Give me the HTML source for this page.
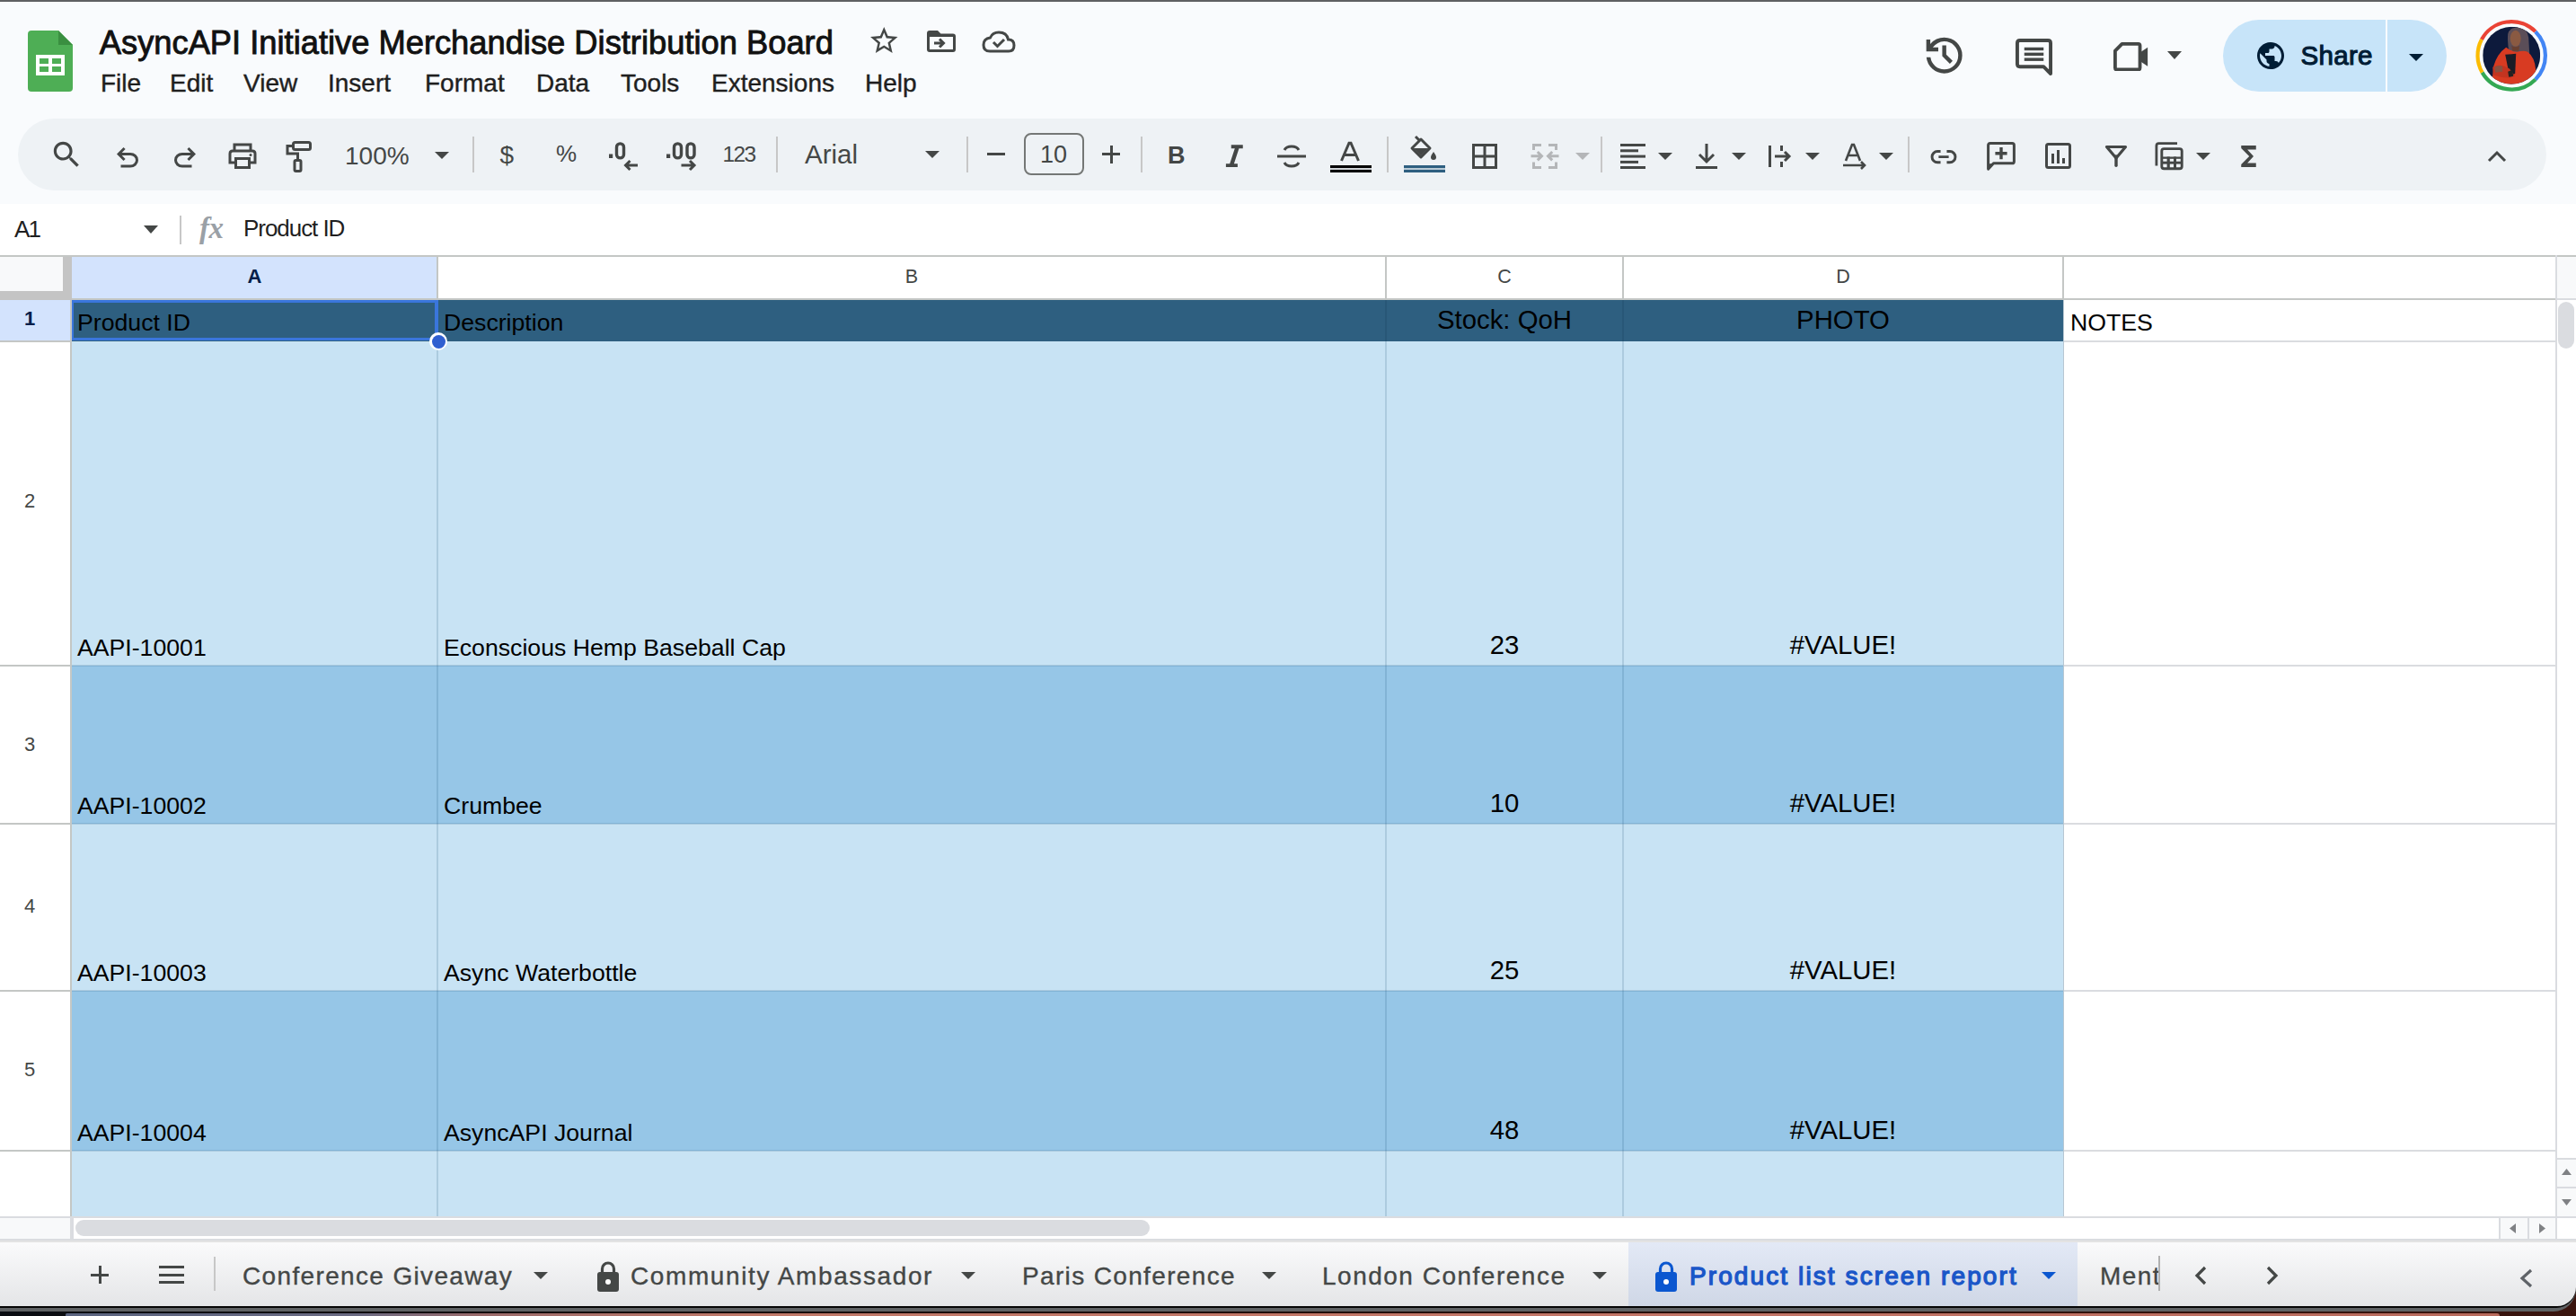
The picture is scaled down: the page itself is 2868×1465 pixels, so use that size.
<!DOCTYPE html><html><head><meta charset="utf-8"><style>
html,body{margin:0;padding:0;width:2868px;height:1465px;overflow:hidden;background:#f9fbfd;}
body{position:relative;font-family:"Liberation Sans",sans-serif;}
.t{position:absolute;white-space:pre;}
.r{position:absolute;}
</style></head><body>
<div class="r" style="left:0px;top:0px;width:2868px;height:2px;background:#5f6062;"></div>
<div class="r" style="left:0px;top:2px;width:2868px;height:225px;background:#f9fbfd;"></div>
<svg class="r" style="left:31px;top:34px;" width="50" height="68" viewBox="0 0 50 68"><path d="M4 0H34L50 16V64Q50 68 46 68H4Q0 68 0 64V4Q0 0 4 0Z" fill="#4eae55"/><path d="M34 0L50 16H34Z" fill="#3a8f40"/><rect x="9" y="27" width="32" height="23" fill="#fff"/><rect x="13" y="31" width="10" height="6" fill="#4eae55"/><rect x="27" y="31" width="10" height="6" fill="#4eae55"/><rect x="13" y="40" width="10" height="6" fill="#4eae55"/><rect x="27" y="40" width="10" height="6" fill="#4eae55"/></svg>
<div class="t" style="left:110.8px;top:30.46px;font-size:36.3px;line-height:36.3px;color:#111;font-weight:400;letter-spacing:0px;font-family:'Liberation Sans',sans-serif;-webkit-text-stroke:0.9px #111;">AsyncAPI Initiative Merchandise Distribution Board</div>
<div class="t" style="left:112px;top:79.09px;font-size:28px;line-height:28px;color:#1f1f1f;font-weight:400;letter-spacing:0px;font-family:'Liberation Sans',sans-serif;-webkit-text-stroke:0.4px #1f1f1f;">File</div>
<div class="t" style="left:189px;top:79.09px;font-size:28px;line-height:28px;color:#1f1f1f;font-weight:400;letter-spacing:0px;font-family:'Liberation Sans',sans-serif;-webkit-text-stroke:0.4px #1f1f1f;">Edit</div>
<div class="t" style="left:271px;top:79.09px;font-size:28px;line-height:28px;color:#1f1f1f;font-weight:400;letter-spacing:0px;font-family:'Liberation Sans',sans-serif;-webkit-text-stroke:0.4px #1f1f1f;">View</div>
<div class="t" style="left:365px;top:79.09px;font-size:28px;line-height:28px;color:#1f1f1f;font-weight:400;letter-spacing:0px;font-family:'Liberation Sans',sans-serif;-webkit-text-stroke:0.4px #1f1f1f;">Insert</div>
<div class="t" style="left:473px;top:79.09px;font-size:28px;line-height:28px;color:#1f1f1f;font-weight:400;letter-spacing:0px;font-family:'Liberation Sans',sans-serif;-webkit-text-stroke:0.4px #1f1f1f;">Format</div>
<div class="t" style="left:597px;top:79.09px;font-size:28px;line-height:28px;color:#1f1f1f;font-weight:400;letter-spacing:0px;font-family:'Liberation Sans',sans-serif;-webkit-text-stroke:0.4px #1f1f1f;">Data</div>
<div class="t" style="left:691px;top:79.09px;font-size:28px;line-height:28px;color:#1f1f1f;font-weight:400;letter-spacing:0px;font-family:'Liberation Sans',sans-serif;-webkit-text-stroke:0.4px #1f1f1f;">Tools</div>
<div class="t" style="left:792px;top:79.09px;font-size:28px;line-height:28px;color:#1f1f1f;font-weight:400;letter-spacing:0px;font-family:'Liberation Sans',sans-serif;-webkit-text-stroke:0.4px #1f1f1f;">Extensions</div>
<div class="t" style="left:963px;top:79.09px;font-size:28px;line-height:28px;color:#1f1f1f;font-weight:400;letter-spacing:0px;font-family:'Liberation Sans',sans-serif;-webkit-text-stroke:0.4px #1f1f1f;">Help</div>
<svg class="r" style="left:965.6px;top:27px;" width="36.5" height="36.5" viewBox="0 0 24 24"><path d="M22 9.24l-7.19-.62L12 2 9.19 8.63 2 9.24l5.46 4.73L5.82 21 12 17.27 18.18 21l-1.63-7.03L22 9.24zM12 15.4l-3.76 2.27 1-4.28-3.32-2.88 4.38-.38L12 6.1l1.71 4.04 4.38.38-3.32 2.88 1 4.28L12 15.4z" fill="#444746"/></svg>
<svg class="r" style="left:1030px;top:31px;" width="36" height="30" viewBox="0 0 36 30"><path d="M5 3H14L17.5 6.5H31Q34 6.5 34 9.5V24Q34 27 31 27H5Q2 27 2 24V6Q2 3 5 3Z" fill="#444746"/><rect x="5" y="10" width="26" height="14" fill="#f9fbfd"/><path d="M10 17H20M16 12.5L20.5 17L16 21.5" fill="none" stroke="#444746" stroke-width="3"/></svg>
<svg class="r" style="left:1092px;top:31.5px;" width="40" height="28" viewBox="0 0 40 28"><path d="M10 25H31Q37 25 37 18.5Q37 12 30.5 12Q29 4 20 4Q13 4 10.5 10Q3 11 3 18Q3 25 10 25Z" fill="none" stroke="#444746" stroke-width="3"/><path d="M14 15L18.5 19.5L26 12" fill="none" stroke="#444746" stroke-width="3"/></svg>
<svg class="r" style="left:2138.3px;top:35.3px;" width="53.3" height="53.3" viewBox="0 -960 960 960"><path d="M480-120q-138 0-240.5-91.5T122-440h82q14 104 92.5 172T480-200q117 0 198.5-81.5T760-480q0-117-81.5-198.5T480-760q-69 0-129 32t-101 88h110v80H120v-240h80v94q51-64 124.5-99T480-840q75 0 140.5 28.5t114 77q48.5 48.5 77 114T840-480q0 75-28.5 140.5t-77 114q-48.5 48.5-114 77T480-120Zm112-192L440-464v-216h80v184l128 128-56 56Z" fill="#444746"/></svg>
<svg class="r" style="left:2243.5px;top:42.5px;" width="41" height="41" viewBox="0 0 42 42"><path d="M5 2H37Q40 2 40 5V40L32 32H5Q2 32 2 29V5Q2 2 5 2Z" fill="none" stroke="#444746" stroke-width="4" stroke-linejoin="round"/><rect x="10" y="10" width="22" height="3.5" fill="#444746"/><rect x="10" y="16" width="22" height="3.5" fill="#444746"/><rect x="10" y="22" width="22" height="3.5" fill="#444746"/></svg>
<svg class="r" style="left:2353px;top:46.8px;" width="40" height="32.4" viewBox="0 0 42 34"><path d="M10 2H29Q31 2 31 4V30Q31 32 29 32H4Q2 32 2 30V10Z" fill="none" stroke="#444746" stroke-width="4" stroke-linejoin="round"/><path d="M31 12L40 6V28L31 22Z" fill="#444746"/></svg>
<svg class="r" style="left:2413px;top:57px;" width="16" height="9" viewBox="0 0 16 9"><path d="M0 0H16L8 9Z" fill="#444746"/></svg>
<div class="r" style="left:2475px;top:22px;width:249px;height:80px;background:#c7e4f9;border-radius:40px;"></div>
<div class="r" style="left:2655.5px;top:22px;width:2px;height:80px;background:#f9fbfd;"></div>
<svg class="r" style="left:2510px;top:43.7px;" width="36" height="36" viewBox="0 0 24 24"><path d="M12 2C6.48 2 2 6.48 2 12s4.48 10 10 10 10-4.48 10-10S17.52 2 12 2zm-1 17.93c-3.95-.49-7-3.85-7-7.93 0-.62.08-1.21.21-1.79L9 15v1c0 1.1.9 2 2 2v1.93zm6.9-2.54c-.26-.81-1-1.39-1.9-1.39h-1v-3c0-.55-.45-1-1-1H8v-2h2c.55 0 1-.45 1-1V7h2c1.1 0 2-.9 2-2v-.41c2.93 1.19 5 4.06 5 7.41 0 2.08-.8 3.97-2.1 5.39z" fill="#001d35"/></svg>
<div class="t" style="left:2561.5px;top:46.52px;font-size:29.5px;line-height:29.5px;color:#001d35;font-weight:400;letter-spacing:0.3px;font-family:'Liberation Sans',sans-serif;-webkit-text-stroke:1.1px #001d35;">Share</div>
<svg class="r" style="left:2682px;top:60px;" width="16" height="8" viewBox="0 0 16 8"><path d="M0 0H16L8 8Z" fill="#001d35"/></svg>
<svg class="r" style="left:2755px;top:21px;" width="82" height="82" viewBox="0 0 82 82"><path d="M7.91 23.10A37.7 37.7 0 0 1 67.86 14.14" fill="none" stroke="#ea4335" stroke-width="4.2"/><path d="M67.86 14.14A37.7 37.7 0 0 1 67.86 67.46" fill="none" stroke="#4285f4" stroke-width="4.2"/><path d="M67.86 67.46A37.7 37.7 0 0 1 8.55 59.65" fill="none" stroke="#34a853" stroke-width="4.2"/><path d="M8.55 59.65A37.7 37.7 0 0 1 7.91 23.10" fill="none" stroke="#fbbc04" stroke-width="4.2"/>
<clipPath id="av"><circle cx="32" cy="32" r="32"/></clipPath>
<g transform="translate(9.2,8.8)"><g clip-path="url(#av)"><rect x="0" y="0" width="64" height="64" fill="#0d1a3c"/>
<path d="M28 8Q30 0 40 1Q50 2 51 12L52 30Q48 34 42 32L30 30Q27 20 28 8Z" fill="#5b4e58"/>
<ellipse cx="36.5" cy="13" rx="6" ry="9" fill="#8a5a42"/>
<path d="M32 21Q36 24 41 21L40 27L33 27Z" fill="#6a4030"/>
<path d="M10 64L12 44Q16 30 26 23Q33 28 38 28Q46 26 50 28Q58 34 59 48L60 64Z" fill="#d83b22"/>
<path d="M25 31L37 30L36 52L30 56Z" fill="#1a1c26"/>
<path d="M11 45Q20 40 30 47L36 55Q30 58 20 56L12 54Z" fill="#c43420"/>
<path d="M13 45Q17 42 22 44L22 50L14 51Z" fill="#8a5040"/>
<path d="M28 50L33 48L34 55L29 56Z" fill="#222"/>
</g></g></svg>
<div class="r" style="left:20px;top:132px;width:2815px;height:80px;background:#eef2f5;border-radius:40px;"></div>
<svg class="r" style="left:55.2px;top:153.2px;" width="38.4" height="38.4" viewBox="0 0 24 24"><path d="M15.5 14h-.79l-.28-.27C15.41 12.59 16 11.11 16 9.5 16 5.91 13.09 3 9.5 3S3 5.91 3 9.5 5.91 16 9.5 16c1.61 0 3.09-.59 4.23-1.57l.27.28v.79l5 4.99L20.49 19l-4.99-5zm-6 0C7.01 14 5 11.99 5 9.5S7.01 5 9.5 5 14 7.01 14 9.5 11.99 14 9.5 14z" fill="#444746"/></svg>
<svg class="r" style="left:124px;top:158px;" width="36" height="36" viewBox="0 -960 960 960"><path d="M280-200v-80h284q63 0 109.5-40T720-420q0-60-46.5-100T564-560H312l104 104-56 56-200-200 200-200 56 56-104 104h252q97 0 166.5 63T800-420q0 94-69.5 157T564-200H280Z" fill="#444746"/></svg>
<svg class="r" style="left:188px;top:158px;" width="36" height="36" viewBox="0 -960 960 960"><path d="M396-200q-97 0-166.5-63T160-420q0-94 69.5-157T396-640h252L544-744l56-56 200 200-200 200-56-56 104-104H396q-63 0-109.5 40T240-420q0 60 46.5 100T396-280h284v80H396Z" fill="#444746"/></svg>
<svg class="r" style="left:254px;top:159px;" width="32" height="30" viewBox="0 0 32 30"><path d="M7 9V2H25V9" fill="none" stroke="#444746" stroke-width="3"/><path d="M7 22H2V12Q2 9 5 9H27Q30 9 30 12V22H25" fill="none" stroke="#444746" stroke-width="3"/><rect x="8.5" y="17.5" width="15" height="10" fill="none" stroke="#444746" stroke-width="3"/><circle cx="25" cy="13.5" r="1.5" fill="#444746"/></svg>
<svg class="r" style="left:317px;top:157px;" width="30" height="36" viewBox="0 0 30 36"><rect x="9.5" y="1.5" width="19" height="8" rx="2" fill="none" stroke="#444746" stroke-width="3"/><path d="M9.5 5.5H3V14H14.5V21" fill="none" stroke="#444746" stroke-width="3"/><rect x="11" y="21.5" width="7" height="12" rx="1.5" fill="none" stroke="#444746" stroke-width="3"/></svg>
<div class="t" style="left:384px;top:160.29px;font-size:28px;line-height:28px;color:#444746;font-weight:400;letter-spacing:0px;font-family:'Liberation Sans',sans-serif;">100%</div>
<svg class="r" style="left:484px;top:169px;" width="16" height="8" viewBox="0 0 16 8"><path d="M0 0H16L8 8Z" fill="#444746"/></svg>
<div class="r" style="left:526px;top:152px;width:2px;height:40px;background:#c7c7c7;"></div>
<div class="t" style="left:556.5px;top:158.79px;font-size:28px;line-height:28px;color:#444746;font-weight:400;letter-spacing:0px;font-family:'Liberation Sans',sans-serif;">$</div>
<div class="t" style="left:619px;top:158.49px;font-size:26px;line-height:26px;color:#444746;font-weight:400;letter-spacing:0px;font-family:'Liberation Sans',sans-serif;">%</div>
<svg class="r" style="left:676px;top:156px;" width="36" height="36" viewBox="0 0 36 36"><rect x="2" y="15.5" width="4.2" height="4.5" fill="#444746"/><rect x="10.5" y="3.9" width="8" height="16" rx="4" fill="none" stroke="#444746" stroke-width="3.4"/><path d="M34 28H21M25.5 23L20.5 28L25.5 33" fill="none" stroke="#444746" stroke-width="3"/></svg>
<svg class="r" style="left:740px;top:156px;" width="36" height="36" viewBox="0 0 36 36"><rect x="2" y="15.5" width="4.2" height="4.5" fill="#444746"/><rect x="10.5" y="3.9" width="8" height="16" rx="4" fill="none" stroke="#444746" stroke-width="3.4"/><rect x="25" y="3.9" width="8" height="16" rx="4" fill="none" stroke="#444746" stroke-width="3.4"/><path d="M18.5 28H32M28 23L33 28L28 33" fill="none" stroke="#444746" stroke-width="3"/></svg>
<div class="t" style="left:804.5px;top:160.26px;font-size:24.5px;line-height:24.5px;color:#444746;font-weight:400;letter-spacing:-1.6px;font-family:'Liberation Sans',sans-serif;">123</div>
<div class="r" style="left:864px;top:152px;width:2px;height:40px;background:#c7c7c7;"></div>
<div class="t" style="left:896px;top:156.52px;font-size:29.5px;line-height:29.5px;color:#444746;font-weight:400;letter-spacing:0px;font-family:'Liberation Sans',sans-serif;">Arial</div>
<svg class="r" style="left:1030px;top:168px;" width="16" height="8" viewBox="0 0 16 8"><path d="M0 0H16L8 8Z" fill="#444746"/></svg>
<div class="r" style="left:1076px;top:152px;width:2px;height:40px;background:#c7c7c7;"></div>
<div class="r" style="left:1099px;top:170px;width:20px;height:3px;background:#444746;"></div>
<div class="r" style="left:1140px;top:148px;width:67px;height:47px;background:transparent;border:2px solid #747775;border-radius:8px;box-sizing:border-box;"></div>
<div class="t" style="left:1158px;top:159.14px;font-size:27px;line-height:27px;color:#444746;font-weight:400;letter-spacing:0px;font-family:'Liberation Sans',sans-serif;">10</div>
<div class="r" style="left:1227px;top:170px;width:20px;height:3px;background:#444746;"></div>
<div class="r" style="left:1235.5px;top:162px;width:3px;height:20px;background:#444746;"></div>
<div class="r" style="left:1270px;top:152px;width:2px;height:40px;background:#c7c7c7;"></div>
<div class="t" style="left:1300px;top:160.14px;font-size:27px;line-height:27px;color:#444746;font-weight:700;letter-spacing:0px;font-family:'Liberation Sans',sans-serif;">B</div>
<svg class="r" style="left:1361px;top:160px;" width="26" height="28" viewBox="0 0 20 21.5"><path d="M7.5 1v3h3.1l-4.3 13H3v3h10v-3H9.9l4.3-13H17.5V1z" fill="#444746"/></svg>
<svg class="r" style="left:1421px;top:161px;" width="34" height="26" viewBox="0 0 34 26"><path d="M9 6Q11 2 17 2Q23 2 25 6M9 20Q11 24 17 24Q23 24 25 20" fill="none" stroke="#444746" stroke-width="3"/><rect x="1" y="11.5" width="32" height="3" fill="#444746"/></svg>
<svg class="r" style="left:1490px;top:157px;" width="26" height="24" viewBox="0 0 26 24"><path d="M3.5 22L12 2.2H14L22.5 22M7 15.5H19" fill="none" stroke="#444746" stroke-width="3"/></svg>
<div class="r" style="left:1481px;top:184px;width:46px;height:8px;background:#000;"></div>
<div class="r" style="left:1481px;top:186.5px;width:46px;height:2.2px;background:#cfd3d7;"></div>
<div class="r" style="left:1544px;top:152px;width:2px;height:40px;background:#c7c7c7;"></div>
<svg class="r" style="left:1568px;top:150px;" width="34" height="30" viewBox="0 0 34 30"><path d="M8 2L12 6" stroke="#444746" stroke-width="3"/><path d="M4 15L14 5L24 15L14 25Z" fill="none" stroke="#444746" stroke-width="3" stroke-linejoin="round"/><path d="M5.5 15H22.5L14 23.5Z" fill="#444746"/><path d="M28 19Q31 23 31 25A3 3 0 0 1 25 25Q25 23 28 19Z" fill="#444746"/></svg>
<div class="r" style="left:1563px;top:184px;width:46px;height:8px;background:#2e5f80;"></div>
<div class="r" style="left:1563px;top:186.5px;width:46px;height:2.2px;background:#b9cad6;"></div>
<svg class="r" style="left:1639px;top:160px;" width="28" height="28" viewBox="0 0 28 28"><rect x="1.5" y="1.5" width="25" height="25" fill="none" stroke="#444746" stroke-width="3"/><path d="M14 1V27M1 14H27" stroke="#444746" stroke-width="3"/></svg>
<svg class="r" style="left:1704px;top:160px;" width="32" height="28" viewBox="0 0 32 28"><path d="M12 1.5H3.5V7M3.5 20.5V26.5H12M20 1.5H28.5V7M28.5 20.5V26.5H20" fill="none" stroke="#b4b6b8" stroke-width="3"/><path d="M0.5 13.7H12M7.8 9L12.5 13.7L7.8 18.4M31.5 13.7H20M24.2 9L19.5 13.7L24.2 18.4" fill="none" stroke="#b4b6b8" stroke-width="3"/></svg>
<svg class="r" style="left:1754px;top:170px;" width="16" height="8" viewBox="0 0 16 8"><path d="M0 0H16L8 8Z" fill="#b4b6b8"/></svg>
<div class="r" style="left:1782px;top:152px;width:2px;height:40px;background:#c7c7c7;"></div>
<svg class="r" style="left:1804px;top:160px;" width="28" height="28" viewBox="0 0 28 28"><rect x="0" y="0" width="28" height="3" fill="#444746"/><rect x="0" y="6.3" width="20" height="3" fill="#444746"/><rect x="0" y="12.6" width="28" height="3" fill="#444746"/><rect x="0" y="18.9" width="20" height="3" fill="#444746"/><rect x="0" y="25" width="28" height="3" fill="#444746"/></svg>
<svg class="r" style="left:1846px;top:170px;" width="16" height="8" viewBox="0 0 16 8"><path d="M0 0H16L8 8Z" fill="#444746"/></svg>
<svg class="r" style="left:1888px;top:160px;" width="24" height="28" viewBox="0 0 24 28"><path d="M12 0V20M4 12L12 20L20 12" fill="none" stroke="#444746" stroke-width="3"/><rect x="0" y="25" width="24" height="3" fill="#444746"/></svg>
<svg class="r" style="left:1928px;top:170px;" width="16" height="8" viewBox="0 0 16 8"><path d="M0 0H16L8 8Z" fill="#444746"/></svg>
<svg class="r" style="left:1969px;top:162px;" width="26" height="24" viewBox="0 0 26 24"><rect x="0" y="0" width="3" height="24" fill="#444746"/><rect x="13" y="0" width="3" height="6" fill="#444746"/><rect x="13" y="18" width="3" height="6" fill="#444746"/><path d="M7 12H23M18 7L23 12L18 17" fill="none" stroke="#444746" stroke-width="3"/></svg>
<svg class="r" style="left:2010px;top:170px;" width="16" height="8" viewBox="0 0 16 8"><path d="M0 0H16L8 8Z" fill="#444746"/></svg>
<svg class="r" style="left:2052px;top:159px;" width="28" height="30" viewBox="0 0 28 30"><path d="M3 20L10 2H12L19 20M6 14H16" fill="none" stroke="#444746" stroke-width="2.6"/><path d="M0 25H24M20 21L24 25L20 29" fill="none" stroke="#444746" stroke-width="2.6"/></svg>
<svg class="r" style="left:2092px;top:170px;" width="16" height="8" viewBox="0 0 16 8"><path d="M0 0H16L8 8Z" fill="#444746"/></svg>
<div class="r" style="left:2124px;top:152px;width:2px;height:40px;background:#c7c7c7;"></div>
<svg class="r" style="left:2147px;top:165.7px;" width="34" height="17.3" viewBox="0 0 34 20"><path d="M13 3H9A7 7 0 0 0 9 17H13M21 3H25A7 7 0 0 1 25 17H21M10.5 10H23.5" fill="none" stroke="#444746" stroke-width="3.4"/></svg>
<svg class="r" style="left:2212px;top:157.5px;" width="32" height="32" viewBox="0 0 34 34"><path d="M4 1.7H30Q32.3 1.7 32.3 4V23Q32.3 25.3 30 25.3H8L1.7 32V4Q1.7 1.7 4 1.7Z" fill="none" stroke="#444746" stroke-width="3.2" stroke-linejoin="round"/><path d="M1.7 26L1.7 32L8 25.3Z" fill="#444746"/><path d="M17 6.5V20.5M10 13.5H24" stroke="#444746" stroke-width="3.6"/></svg>
<svg class="r" style="left:2277px;top:159px;" width="30" height="30" viewBox="0 0 30 30"><rect x="1.5" y="1.5" width="26" height="26" rx="2" fill="none" stroke="#444746" stroke-width="3"/><rect x="7" y="12" width="3" height="11" fill="#444746"/><rect x="13" y="8" width="3" height="15" fill="#444746"/><rect x="19" y="17" width="3" height="6" fill="#444746"/></svg>
<svg class="r" style="left:2343px;top:161px;" width="26" height="26" viewBox="0 0 26 26"><path d="M2.5 2.5H23.5L13 15Z" fill="none" stroke="#444746" stroke-width="3.2" stroke-linejoin="round"/><path d="M13 13V23.3" stroke="#444746" stroke-width="3.4" stroke-linecap="round"/></svg>
<svg class="r" style="left:2398px;top:157px;" width="34" height="34" viewBox="0 0 34 34"><path d="M26 2.6H5.5Q2.9 2.6 2.9 5.2V27.5" fill="none" stroke="#444746" stroke-width="2.8"/><rect x="8.8" y="8.6" width="22.4" height="22.2" rx="2.5" fill="none" stroke="#444746" stroke-width="2.9"/><rect x="8.8" y="17.5" width="22.4" height="2.3" fill="#444746"/><rect x="8.8" y="22.7" width="22.4" height="2.9" fill="#444746"/><rect x="14.6" y="17.5" width="3.2" height="13" fill="#444746"/><rect x="22" y="17.5" width="3" height="13" fill="#444746"/></svg>
<svg class="r" style="left:2445px;top:170px;" width="16" height="8" viewBox="0 0 16 8"><path d="M0 0H16L8 8Z" fill="#444746"/></svg>
<svg class="r" style="left:2486.5px;top:156px" width="33" height="36" viewBox="0 0 24 24" preserveAspectRatio="none"><path d="M18 4H6v2l6.5 6L6 18v2h12v-3h-7l5-5-5-5h7z" fill="#444746"/></svg>
<svg class="r" style="left:2769px;top:167px;" width="22" height="14" viewBox="0 0 22 14"><path d="M2 12L11 3L20 12" fill="none" stroke="#444746" stroke-width="3"/></svg>
<div class="r" style="left:0px;top:227px;width:2868px;height:58px;background:#ffffff;"></div>
<div class="t" style="left:16px;top:241.99px;font-size:26px;line-height:26px;color:#1f1f1f;font-weight:400;letter-spacing:0px;font-family:'Liberation Sans',sans-serif;">A</div>
<div class="t" style="left:31.5px;top:241.99px;font-size:26px;line-height:26px;color:#1f1f1f;font-weight:400;letter-spacing:0px;font-family:'Liberation Sans',sans-serif;">1</div>
<svg class="r" style="left:160px;top:251px;" width="16" height="9" viewBox="0 0 16 9"><path d="M0 0H16L8 9Z" fill="#444746"/></svg>
<div class="r" style="left:200px;top:240px;width:2px;height:32px;background:#c7c7c7;"></div>
<div class="t" style="left:222px;top:238.06px;font-size:33px;line-height:33px;color:#9aa0a6;font-weight:700;letter-spacing:-0.5px;font-family:'Liberation Serif',sans-serif;font-style:italic;">fx</div>
<div class="t" style="left:271px;top:241.49px;font-size:26px;line-height:26px;color:#1f1f1f;font-weight:400;letter-spacing:-1.05px;font-family:'Liberation Sans',sans-serif;">Product ID</div>
<div class="r" style="left:0px;top:285px;width:2868px;height:49px;background:#ffffff;"></div>
<div class="r" style="left:80px;top:286px;width:407px;height:47px;background:#d3e3fd;"></div>
<div class="r" style="left:0px;top:286px;width:70px;height:38px;background:#f8f9fa;"></div>
<div class="r" style="left:70px;top:286px;width:10px;height:48px;background:#c4c4c4;"></div>
<div class="r" style="left:0px;top:324px;width:80px;height:10px;background:#c4c4c4;"></div>
<div class="r" style="left:0px;top:334px;width:78px;height:1021px;background:#ffffff;"></div>
<div class="r" style="left:0px;top:334px;width:78px;height:46px;background:#d3e3fd;"></div>
<div class="r" style="left:0px;top:284px;width:2868px;height:2px;background:#c4c7c5;"></div>
<div class="r" style="left:80px;top:332px;width:2765px;height:2px;background:#c4c7c5;"></div>
<div class="r" style="left:486px;top:286px;width:2px;height:47px;background:#c4c7c5;"></div>
<div class="r" style="left:1542px;top:286px;width:2px;height:47px;background:#c4c7c5;"></div>
<div class="r" style="left:1806px;top:286px;width:2px;height:47px;background:#c4c7c5;"></div>
<div class="r" style="left:2296px;top:286px;width:2px;height:47px;background:#c4c7c5;"></div>
<div class="r" style="left:0px;top:379px;width:78px;height:2px;background:#c4c7c5;"></div>
<div class="r" style="left:0px;top:740px;width:78px;height:2px;background:#c4c7c5;"></div>
<div class="r" style="left:0px;top:916px;width:78px;height:2px;background:#c4c7c5;"></div>
<div class="r" style="left:0px;top:1102px;width:78px;height:2px;background:#c4c7c5;"></div>
<div class="r" style="left:0px;top:1280px;width:78px;height:2px;background:#c4c7c5;"></div>
<div class="r" style="left:0px;top:1354px;width:78px;height:2px;background:#c4c7c5;"></div>
<div class="r" style="left:78px;top:334px;width:2px;height:1047px;background:#c4c7c5;"></div>
<div class="r" style="left:80px;top:334px;width:2217px;height:46px;background:#2e5f80;"></div>
<div class="r" style="left:80px;top:380px;width:2217px;height:361px;background:#c8e3f4;"></div>
<div class="r" style="left:80px;top:741px;width:2217px;height:176px;background:#96c6e7;"></div>
<div class="r" style="left:80px;top:917px;width:2217px;height:186px;background:#c8e3f4;"></div>
<div class="r" style="left:80px;top:1103px;width:2217px;height:178px;background:#96c6e7;"></div>
<div class="r" style="left:80px;top:1281px;width:2217px;height:74px;background:#c8e3f4;"></div>
<div class="r" style="left:2297px;top:334px;width:548px;height:1021px;background:#ffffff;"></div>
<div class="r" style="left:486px;top:334px;width:2px;height:46px;background:rgba(0,30,60,0.12);"></div>
<div class="r" style="left:486px;top:380px;width:2px;height:975px;background:rgba(30,80,120,0.16);"></div>
<div class="r" style="left:1542px;top:334px;width:2px;height:46px;background:rgba(0,30,60,0.12);"></div>
<div class="r" style="left:1542px;top:380px;width:2px;height:975px;background:rgba(30,80,120,0.16);"></div>
<div class="r" style="left:1806px;top:334px;width:2px;height:46px;background:rgba(0,30,60,0.12);"></div>
<div class="r" style="left:1806px;top:380px;width:2px;height:975px;background:rgba(30,80,120,0.16);"></div>
<div class="r" style="left:80px;top:740px;width:2217px;height:2px;background:rgba(30,80,120,0.16);"></div>
<div class="r" style="left:80px;top:916px;width:2217px;height:2px;background:rgba(30,80,120,0.16);"></div>
<div class="r" style="left:80px;top:1102px;width:2217px;height:2px;background:rgba(30,80,120,0.16);"></div>
<div class="r" style="left:80px;top:1280px;width:2217px;height:2px;background:rgba(30,80,120,0.16);"></div>
<div class="r" style="left:2297px;top:379px;width:548px;height:2px;background:#dadce0;"></div>
<div class="r" style="left:2297px;top:740px;width:548px;height:2px;background:#dadce0;"></div>
<div class="r" style="left:2297px;top:916px;width:548px;height:2px;background:#dadce0;"></div>
<div class="r" style="left:2297px;top:1102px;width:548px;height:2px;background:#dadce0;"></div>
<div class="r" style="left:2297px;top:1280px;width:548px;height:2px;background:#dadce0;"></div>
<div class="r" style="left:2297px;top:334px;width:1px;height:1021px;background:#b8c7d2;"></div>
<div class="t" style="left:133.5px;width:300px;text-align:center;top:297.37px;font-size:22px;line-height:22px;color:#041e49;font-weight:700;letter-spacing:0px">A</div>
<div class="t" style="left:865.0px;width:300px;text-align:center;top:297.80px;font-size:21.5px;line-height:21.5px;color:#444746;font-weight:400;letter-spacing:0px">B</div>
<div class="t" style="left:1575.0px;width:200px;text-align:center;top:297.80px;font-size:21.5px;line-height:21.5px;color:#444746;font-weight:400;letter-spacing:0px">C</div>
<div class="t" style="left:1952.0px;width:200px;text-align:center;top:297.80px;font-size:21.5px;line-height:21.5px;color:#444746;font-weight:400;letter-spacing:0px">D</div>
<div class="t" style="left:3.0px;width:60px;text-align:center;top:343.87px;font-size:22px;line-height:22px;color:#041e49;font-weight:700;letter-spacing:0px">1</div>
<div class="t" style="left:3.0px;width:60px;text-align:center;top:547.37px;font-size:22px;line-height:22px;color:#444746;font-weight:400;letter-spacing:0px">2</div>
<div class="t" style="left:3.0px;width:60px;text-align:center;top:818.37px;font-size:22px;line-height:22px;color:#444746;font-weight:400;letter-spacing:0px">3</div>
<div class="t" style="left:3.0px;width:60px;text-align:center;top:997.87px;font-size:22px;line-height:22px;color:#444746;font-weight:400;letter-spacing:0px">4</div>
<div class="t" style="left:3.0px;width:60px;text-align:center;top:1179.87px;font-size:22px;line-height:22px;color:#444746;font-weight:400;letter-spacing:0px">5</div>
<div class="t" style="left:86px;top:345.92px;font-size:26.67px;line-height:26.67px;color:#000;font-weight:400;letter-spacing:0px;font-family:'Liberation Sans',sans-serif;">Product ID</div>
<div class="t" style="left:494px;top:345.92px;font-size:26.67px;line-height:26.67px;color:#000;font-weight:400;letter-spacing:0px;font-family:'Liberation Sans',sans-serif;">Description</div>
<div class="t" style="left:1545.0px;width:260px;text-align:center;top:341.17px;font-size:29.33px;line-height:29.33px;color:#000;font-weight:400;letter-spacing:0px">Stock: QoH</div>
<div class="t" style="left:1852.0px;width:400px;text-align:center;top:341.17px;font-size:29.33px;line-height:29.33px;color:#000;font-weight:400;letter-spacing:0px">PHOTO</div>
<div class="t" style="left:2305px;top:345.92px;font-size:26.67px;line-height:26.67px;color:#000;font-weight:400;letter-spacing:0px;font-family:'Liberation Sans',sans-serif;">NOTES</div>
<div class="t" style="left:86px;top:708.22px;font-size:26.67px;line-height:26.67px;color:#000;font-weight:400;letter-spacing:0px;font-family:'Liberation Sans',sans-serif;">AAPI-10001</div>
<div class="t" style="left:494px;top:708.22px;font-size:26.67px;line-height:26.67px;color:#000;font-weight:400;letter-spacing:0px;font-family:'Liberation Sans',sans-serif;">Econscious Hemp Baseball Cap</div>
<div class="t" style="left:1545.0px;width:260px;text-align:center;top:703.17px;font-size:29.33px;line-height:29.33px;color:#000;font-weight:400;letter-spacing:0px">23</div>
<div class="t" style="left:1852.0px;width:400px;text-align:center;top:703.17px;font-size:29.33px;line-height:29.33px;color:#000;font-weight:400;letter-spacing:0px">#VALUE!</div>
<div class="t" style="left:86px;top:884.22px;font-size:26.67px;line-height:26.67px;color:#000;font-weight:400;letter-spacing:0px;font-family:'Liberation Sans',sans-serif;">AAPI-10002</div>
<div class="t" style="left:494px;top:884.22px;font-size:26.67px;line-height:26.67px;color:#000;font-weight:400;letter-spacing:0px;font-family:'Liberation Sans',sans-serif;">Crumbee</div>
<div class="t" style="left:1545.0px;width:260px;text-align:center;top:879.17px;font-size:29.33px;line-height:29.33px;color:#000;font-weight:400;letter-spacing:0px">10</div>
<div class="t" style="left:1852.0px;width:400px;text-align:center;top:879.17px;font-size:29.33px;line-height:29.33px;color:#000;font-weight:400;letter-spacing:0px">#VALUE!</div>
<div class="t" style="left:86px;top:1070.22px;font-size:26.67px;line-height:26.67px;color:#000;font-weight:400;letter-spacing:0px;font-family:'Liberation Sans',sans-serif;">AAPI-10003</div>
<div class="t" style="left:494px;top:1070.22px;font-size:26.67px;line-height:26.67px;color:#000;font-weight:400;letter-spacing:0px;font-family:'Liberation Sans',sans-serif;">Async Waterbottle</div>
<div class="t" style="left:1545.0px;width:260px;text-align:center;top:1065.17px;font-size:29.33px;line-height:29.33px;color:#000;font-weight:400;letter-spacing:0px">25</div>
<div class="t" style="left:1852.0px;width:400px;text-align:center;top:1065.17px;font-size:29.33px;line-height:29.33px;color:#000;font-weight:400;letter-spacing:0px">#VALUE!</div>
<div class="t" style="left:86px;top:1248.22px;font-size:26.67px;line-height:26.67px;color:#000;font-weight:400;letter-spacing:0px;font-family:'Liberation Sans',sans-serif;">AAPI-10004</div>
<div class="t" style="left:494px;top:1248.22px;font-size:26.67px;line-height:26.67px;color:#000;font-weight:400;letter-spacing:0px;font-family:'Liberation Sans',sans-serif;">AsyncAPI Journal</div>
<div class="t" style="left:1545.0px;width:260px;text-align:center;top:1243.17px;font-size:29.33px;line-height:29.33px;color:#000;font-weight:400;letter-spacing:0px">48</div>
<div class="t" style="left:1852.0px;width:400px;text-align:center;top:1243.17px;font-size:29.33px;line-height:29.33px;color:#000;font-weight:400;letter-spacing:0px">#VALUE!</div>
<div class="r" style="left:80px;top:334px;width:408px;height:2.5px;background:#3a76dc;"></div>
<div class="r" style="left:80px;top:375.5px;width:408px;height:3px;background:#3a76dc;"></div>
<div class="r" style="left:80px;top:334px;width:2px;height:45px;background:#3a76dc;"></div>
<div class="r" style="left:484px;top:334px;width:4px;height:45px;background:#3a76dc;"></div>
<div class="r" style="left:478px;top:370px;width:20px;height:20px;border-radius:50%;background:#fff;"></div>
<div class="r" style="left:480.5px;top:372.5px;width:15px;height:15px;border-radius:50%;background:#2f5fd0;"></div>
<div class="r" style="left:2845px;top:286px;width:23px;height:1095px;background:#ffffff;"></div>
<div class="r" style="left:2845px;top:284px;width:2px;height:1097px;background:#dadce0;"></div>
<div class="r" style="left:2847px;top:286px;width:21px;height:47px;background:#f8f9fa;"></div>
<div class="r" style="left:2847px;top:332px;width:21px;height:2px;background:#dadce0;"></div>
<div class="r" style="left:2848px;top:336px;width:18px;height:52px;background:#dadce0;border-radius:9px;"></div>
<div class="r" style="left:2847px;top:1290px;width:21px;height:65px;background:#f8f9fa;"></div>
<div class="r" style="left:2847px;top:1289px;width:21px;height:2px;background:#dadce0;"></div>
<div class="r" style="left:2847px;top:1321px;width:21px;height:2px;background:#dadce0;"></div>
<svg class="r" style="left:2852px;top:1301px;" width="11" height="7" viewBox="0 0 11 7"><path d="M0 7H11L5.5 0Z" fill="#7f8184"/></svg>
<svg class="r" style="left:2852px;top:1335px;" width="11" height="7" viewBox="0 0 11 7"><path d="M0 0H11L5.5 7Z" fill="#7f8184"/></svg>
<div class="r" style="left:0px;top:1355px;width:2868px;height:26px;background:#ffffff;"></div>
<div class="r" style="left:0px;top:1354px;width:2868px;height:2px;background:#dadce0;"></div>
<div class="r" style="left:0px;top:1356px;width:78px;height:25px;background:#f8f9fa;"></div>
<div class="r" style="left:78px;top:1356px;width:4px;height:25px;background:#dadce0;"></div>
<div class="r" style="left:84px;top:1358px;width:1196px;height:18px;background:#dadce0;border-radius:9px;"></div>
<div class="r" style="left:2782px;top:1356px;width:2px;height:25px;background:#dadce0;"></div>
<div class="r" style="left:2814px;top:1356px;width:2px;height:25px;background:#dadce0;"></div>
<div class="r" style="left:2784px;top:1356px;width:30px;height:25px;background:#f8f9fa;"></div>
<div class="r" style="left:2816px;top:1356px;width:29px;height:25px;background:#f8f9fa;"></div>
<div class="r" style="left:2845px;top:1356px;width:2px;height:25px;background:#dadce0;"></div>
<svg class="r" style="left:2794px;top:1362px;" width="7" height="11" viewBox="0 0 7 11"><path d="M7 0V11L0 5.5Z" fill="#7f8184"/></svg>
<svg class="r" style="left:2827px;top:1362px;" width="7" height="11" viewBox="0 0 7 11"><path d="M0 0V11L7 5.5Z" fill="#7f8184"/></svg>
<div class="r" style="left:0px;top:1379px;width:2868px;height:2px;background:#dadce0;"></div>
<div class="r" style="left:0px;top:1381px;width:2868px;height:84px;background:linear-gradient(90deg,#0a0d12 0%,#1a0c08 40%,#2a100a 70%,#3a140e 100%);"></div>
<div class="r" style="left:73px;top:1462px;width:2710px;height:3px;background:linear-gradient(90deg,#5a6480 0%,#6a6a82 12%,#9a6a6a 17%,#c07868 28%,#c27466 70%,#b86a5c 100%);border-radius:4px 8px 0 0;"></div>
<div class="r" style="left:0px;top:1381px;width:2868px;height:78.5px;background:#5f6264;border-radius:0 0 25px 0;"></div>
<div class="r" style="left:0px;top:1381px;width:2868px;height:74.5px;background:#050505;border-radius:0 0 22px 0;"></div>
<div class="r" style="left:0px;top:1381px;width:2868px;height:73px;background:linear-gradient(#fbfbfc,#e4e5e7);border-radius:0 0 21px 0;"></div>
<div class="r" style="left:0px;top:1381px;width:2868px;height:2px;background:#e3e3e3;"></div>
<div class="r" style="left:1813px;top:1383px;width:500px;height:71px;background:linear-gradient(#e3e9f6,#cfd7e6);"></div>
<div class="r" style="left:101px;top:1418px;width:20px;height:3px;background:#444746;"></div>
<div class="r" style="left:109.5px;top:1409px;width:3px;height:20px;background:#444746;"></div>
<div class="r" style="left:177px;top:1409px;width:28px;height:3px;background:#444746;"></div>
<div class="r" style="left:177px;top:1417.5px;width:28px;height:3px;background:#444746;"></div>
<div class="r" style="left:177px;top:1425.5px;width:28px;height:3px;background:#444746;"></div>
<div class="r" style="left:238px;top:1399px;width:2px;height:38px;background:#c7c7c7;"></div>
<div class="t" style="left:270px;top:1406.79px;font-size:28px;line-height:28px;color:#444746;font-weight:400;letter-spacing:1.35px;font-family:'Liberation Sans',sans-serif;-webkit-text-stroke:0.35px #444746;">Conference Giveaway</div>
<svg class="r" style="left:594px;top:1416px;" width="16" height="8" viewBox="0 0 16 8"><path d="M0 0H16L8 8Z" fill="#444746"/></svg>
<svg class="r" style="left:665px;top:1404px;" width="24" height="34" viewBox="0 0 24 34"><path d="M5.5 13V8.5A6.5 6.5 0 0 1 18.5 8.5V13" fill="none" stroke="#444746" stroke-width="3.2"/><rect x="0" y="12" width="24" height="22" rx="3" fill="#444746"/><circle cx="12" cy="23" r="3" fill="#fff"/></svg>
<div class="t" style="left:702px;top:1406.79px;font-size:28px;line-height:28px;color:#444746;font-weight:400;letter-spacing:1.6px;font-family:'Liberation Sans',sans-serif;-webkit-text-stroke:0.35px #444746;">Community Ambassador</div>
<svg class="r" style="left:1070px;top:1416px;" width="16" height="8" viewBox="0 0 16 8"><path d="M0 0H16L8 8Z" fill="#444746"/></svg>
<div class="t" style="left:1138px;top:1406.79px;font-size:28px;line-height:28px;color:#444746;font-weight:400;letter-spacing:1.35px;font-family:'Liberation Sans',sans-serif;-webkit-text-stroke:0.35px #444746;">Paris Conference</div>
<svg class="r" style="left:1405px;top:1416px;" width="16" height="8" viewBox="0 0 16 8"><path d="M0 0H16L8 8Z" fill="#444746"/></svg>
<div class="t" style="left:1472px;top:1406.79px;font-size:28px;line-height:28px;color:#444746;font-weight:400;letter-spacing:1.5px;font-family:'Liberation Sans',sans-serif;-webkit-text-stroke:0.35px #444746;">London Conference</div>
<svg class="r" style="left:1773px;top:1416px;" width="16" height="8" viewBox="0 0 16 8"><path d="M0 0H16L8 8Z" fill="#444746"/></svg>
<svg class="r" style="left:1843px;top:1404px;" width="24" height="34" viewBox="0 0 24 34"><path d="M5.5 13V8.5A6.5 6.5 0 0 1 18.5 8.5V13" fill="none" stroke="#0b57d0" stroke-width="3.2"/><rect x="0" y="12" width="24" height="22" rx="3" fill="#0b57d0"/><circle cx="12" cy="23" r="3" fill="#fff"/></svg>
<div class="t" style="left:1881px;top:1406.79px;font-size:28px;line-height:28px;color:#1a56c8;font-weight:400;letter-spacing:2.1px;font-family:'Liberation Sans',sans-serif;-webkit-text-stroke:1.3px #1a56c8;">Product list screen report</div>
<svg class="r" style="left:2273px;top:1416px;" width="16" height="8" viewBox="0 0 16 8"><path d="M0 0H16L8 8Z" fill="#0b57d0"/></svg>
<div class="t" style="left:2338px;top:1406.79px;font-size:28px;line-height:28px;color:#444746;font-weight:400;letter-spacing:1.4px;font-family:'Liberation Sans',sans-serif;-webkit-text-stroke:0.35px #444746;">Ment</div>
<div class="r" style="left:2403px;top:1398px;width:2px;height:39px;background:#b0b0b0;"></div>
<svg class="r" style="left:2442px;top:1409px;" width="16" height="22" viewBox="0 0 16 22"><path d="M13 2L4 11L13 20" fill="none" stroke="#444746" stroke-width="3.2"/></svg>
<svg class="r" style="left:2522px;top:1409px;" width="16" height="22" viewBox="0 0 16 22"><path d="M3 2L12 11L3 20" fill="none" stroke="#444746" stroke-width="3.2"/></svg>
<svg class="r" style="left:2803px;top:1412px;" width="18" height="22" viewBox="0 0 18 22"><path d="M15 2L5 11L15 20" fill="none" stroke="#5f6368" stroke-width="3.2"/></svg>
</body></html>
